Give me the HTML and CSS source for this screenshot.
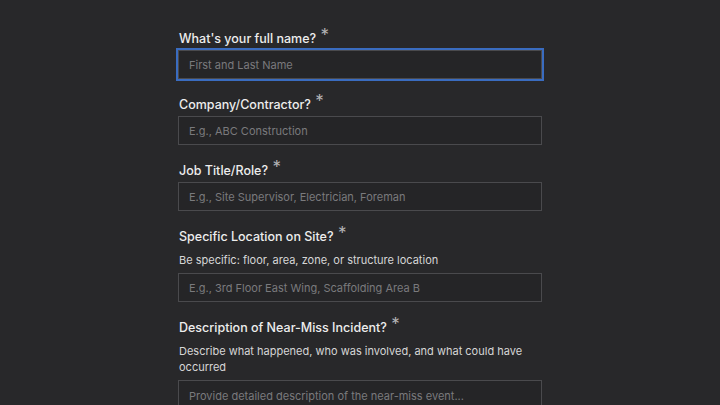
FILE: index.html
```html
<!DOCTYPE html>
<html lang="en">
<head>
<meta charset="utf-8">
<title>Near-Miss Report</title>
<link rel="stylesheet" href="styles.css">
</head>
<body>
<main class="page">
  <form class="form">
    <div class="field">
      <label class="label" for="name">What's your full name? <span class="req">*</span></label>
      <input class="input is-focused" id="name" type="text" placeholder="First and Last Name">
    </div>
    <div class="field">
      <label class="label" for="company">Company/Contractor? <span class="req">*</span></label>
      <input class="input" id="company" type="text" placeholder="E.g., ABC Construction">
    </div>
    <div class="field">
      <label class="label" for="role">Job Title/Role? <span class="req">*</span></label>
      <input class="input" id="role" type="text" placeholder="E.g., Site Supervisor, Electrician, Foreman">
    </div>
    <div class="field">
      <label class="label" for="loc">Specific Location on Site? <span class="req">*</span></label>
      <p class="help">Be specific: floor, area, zone, or structure location</p>
      <input class="input" id="loc" type="text" placeholder="E.g., 3rd Floor East Wing, Scaffolding Area B">
    </div>
    <div class="field">
      <label class="label" for="desc">Description of Near-Miss Incident? <span class="req">*</span></label>
      <p class="help">Describe what happened, who was involved, and what could have occurred</p>
      <textarea class="input textarea" id="desc" rows="5" placeholder="Provide detailed description of the near-miss event..."></textarea>
    </div>
  </form>
</main>
</body>
</html>
```
FILE: styles.css
```css
* { box-sizing: border-box; }
html, body {
  margin: 0;
  padding: 0;
  background: #28282a;
  font-family: Inter, "Noto Sans", "Liberation Sans", sans-serif;
  color: #ececec;
}
.page {
  display: flex;
  justify-content: center;
  padding-top: 27px;
}
.form {
  width: 364px;
  display: flex;
  flex-direction: column;
  gap: 14px;
}
.field {
  display: flex;
  flex-direction: column;
}
.label {
  display: block;
  font-size: 12.5px;
  line-height: 20px;
  font-weight: 500;
  color: #ededed;
  padding-left: 1px;
  padding-top: 2px;
  margin-bottom: 1px;
}
.req {
  position: relative;
  top: -2px;
  font-size: 17px;
  line-height: 0;
  color: #b4b4b6;
  font-weight: 400;
  margin-left: 1px;
}
.help {
  margin: 4px 0 5px;
  padding-left: 1px;
  font-size: 11px;
  line-height: 16px;
  color: #d6d6d6;
}
.input {
  display: block;
  width: 100%;
  height: 29px;
  padding: 0 10px;
  border: 1px solid #4a4a4d;
  border-radius: 0;
  background: #252527;
  color: #ececec;
  font-family: inherit;
  font-size: 11px;
  outline: none;
}
.input::placeholder {
  color: #7a7a7d;
}
.input.is-focused {
  box-shadow: 0 0 0 2px #3a6cc0;
}
.textarea {
  height: 80px;
  padding: 7px 10px;
  resize: none;
  line-height: 16px;
}
```
